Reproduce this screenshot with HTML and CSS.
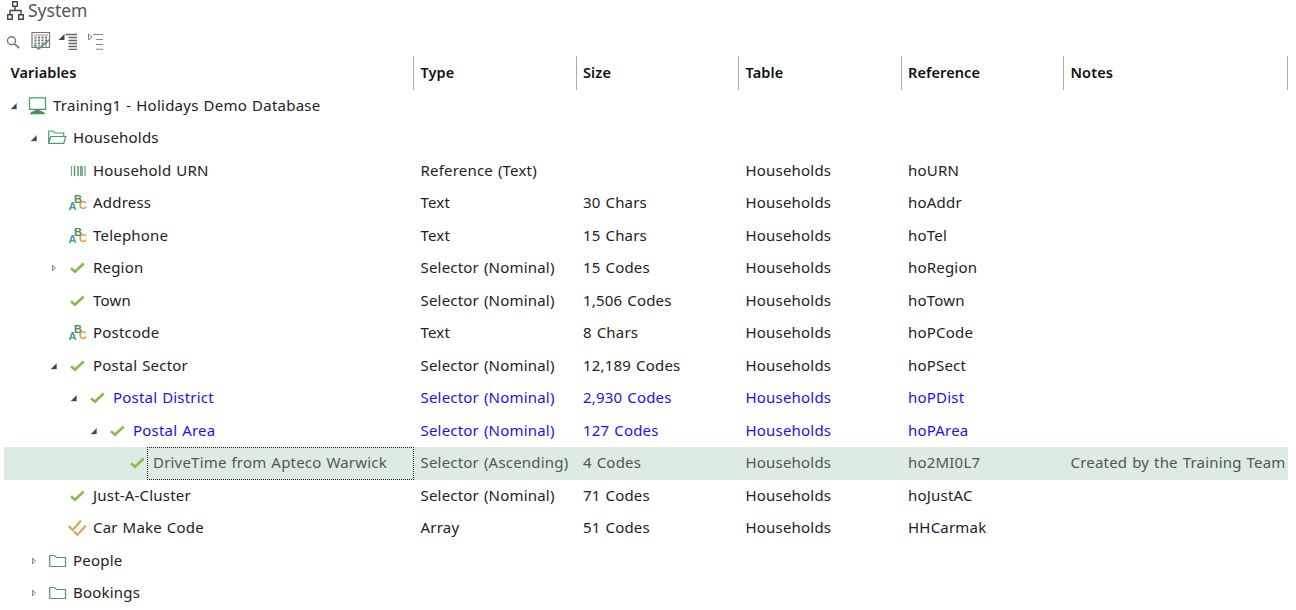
FILE: index.html
```html
<!DOCTYPE html>
<html lang="en">
<head>
    <meta charset="UTF-8">
    <meta name="viewport" content="width=device-width, initial-scale=1.0">
    <title>System</title>
    <link rel="stylesheet" href="styles.css">
</head>
<body>
    <!-- Icon definitions -->
    <svg class="sprite" xmlns="http://www.w3.org/2000/svg">
        <symbol id="open" viewBox="0 0 20 20"><path d="M12.500 7.500v5.500H7z" fill="#444" stroke="#666" stroke-width=".4"/></symbol>
        <symbol id="closed" viewBox="0 0 20 20"><path d="M8.500 7v6l3-3z" fill="#eee" stroke="#888"/></symbol>
        <symbol id="computer" viewBox="0 0 20 20">
            <path d="M2.500 1.800h16v11.500h-16z" fill="none" stroke="#4b9e62" stroke-width="1.300"/>
            <path d="M8.500 14h4l3.500 2H5z" fill="#777"/>
            <path d="M4.500 15.700h12l2 2.600h-16z" fill="#3f9a50"/>
        </symbol>
        <symbol id="folder-open" viewBox="0 0 20 20"><path d="M1.700 15.300V3h4.500l1.500 2h9v3M1.700 15.300l2-6.800h15l-2 6.800z" fill="none" stroke="#4b9e62" stroke-width="1.200"/></symbol>
        <symbol id="folder" viewBox="0 0 20 20"><path d="M2.700 15.500v-11h4.800l2 2h9v9z" fill="none" stroke="#4b9e62" stroke-width="1.200"/></symbol>
        <symbol id="barcode" viewBox="0 0 20 20">
            <path d="M4.500 5v10M13.500 5v10" stroke="#7da587" stroke-width="1.200"/>
            <path d="M7.500 5v10M11 5v10M15 5v10" stroke="#4b9e62" stroke-width="1.400"/>
            <path d="M18 5v10" stroke="#888" stroke-width="1.200"/>
        </symbol>
        <symbol id="abc" viewBox="0 0 20 20">
            <text x="1.500" y="17" fill="#2f9e9b" class="abc-letter">A</text>
            <text x="7" y="9.500" fill="#4d8d62" class="abc-letter">B</text>
            <text x="12" y="16" fill="#e69a45" class="abc-letter">C</text>
        </symbol>
        <symbol id="check" viewBox="0 0 20 20"><path d="M4 10.300l4 3.400L16.700 5.500" fill="none" stroke="#8abb51" stroke-width="2.800"/></symbol>
        <symbol id="array" viewBox="0 0 20 20"><path d="M1.500 8l4.300 4L14 2.500M6.800 13.300l3.600 3.700L19 7.500" fill="none" stroke="#dda65c" stroke-width="2.200"/></symbol>
    </svg>

    <div class="title">
        <svg class="title-icon" viewBox="0 0 20 22"><path d="M7.700 1.700h4.600v4.600H7.700zM2.700 14.700h4.600v4.600H2.700zM13.700 14.700h4.600v4.600h-4.600zM10 6.300v4.200M5 14.700v-4.200h11v4.200" fill="none" stroke="#444" stroke-width="1.400"/></svg>
        <span>System</span>
    </div>

    <div class="toolbar">
        <svg viewBox="0 0 20 20"><circle cx="7.500" cy="10.800" r="4" fill="none" stroke="#777" stroke-width="1.400"/><path d="M10.500 13.800l4.700 4.300" stroke="#777" stroke-width="1.700"/></svg>
        <svg viewBox="0 0 20 20">
            <path d="M1 2.500h17.500v15H1z" fill="#fff" stroke="#777" stroke-width="1.200"/>
            <path d="M3 5h14" stroke="#999"/>
            <path d="M4.500 6.500v10M8 6.500v10M11.500 6.500v10M15 6.500v10" stroke="#777" stroke-width="2" stroke-dasharray="2 1"/>
            <path d="M3 15l4.500 4L18 10" fill="none" stroke="#6a9c78" stroke-width="1.800"/>
        </svg>
        <svg viewBox="0 0 20 20"><path d="M6.500 4v6h-6z" fill="#444"/><path d="M7.500 4.500H19M10.500 7.500H19M10.500 10.500H19M10.500 13.500H19M10.500 16.500H19M10.500 19.300H19" stroke="#666" stroke-width="1.300"/></svg>
        <svg viewBox="0 0 20 20"><path d="M3.500 4v6L7 7z" fill="none" stroke="#888"/><path d="M8 4.500h10M11 9.500h7M11 14.500h7M11 19.300h7" stroke="#888" stroke-width="1.100"/></svg>
    </div>

    <div class="grid">
        <div class="row header">
            <div>Variables</div><div>Type</div><div>Size</div><div>Table</div><div>Reference</div><div>Notes</div>
        </div>
        <div class="row">
            <div class="tree level-0"><svg><use href="#open"/></svg><svg><use href="#computer"/></svg><span class="database">Training1 - Holidays Demo Database</span></div>
        </div>
        <div class="row">
            <div class="tree level-1"><svg><use href="#open"/></svg><svg><use href="#folder-open"/></svg><span>Households</span></div>
        </div>
        <div class="row">
            <div class="tree level-2"><svg></svg><svg><use href="#barcode"/></svg><span>Household URN</span></div>
            <div>Reference (Text)</div><div></div><div>Households</div><div>hoURN</div><div></div>
        </div>
        <div class="row">
            <div class="tree level-2"><svg></svg><svg><use href="#abc"/></svg><span>Address</span></div>
            <div>Text</div><div>30 Chars</div><div>Households</div><div>hoAddr</div><div></div>
        </div>
        <div class="row">
            <div class="tree level-2"><svg></svg><svg><use href="#abc"/></svg><span>Telephone</span></div>
            <div>Text</div><div>15 Chars</div><div>Households</div><div>hoTel</div><div></div>
        </div>
        <div class="row">
            <div class="tree level-2"><svg><use href="#closed"/></svg><svg><use href="#check"/></svg><span>Region</span></div>
            <div>Selector (Nominal)</div><div>15 Codes</div><div>Households</div><div>hoRegion</div><div></div>
        </div>
        <div class="row">
            <div class="tree level-2"><svg></svg><svg><use href="#check"/></svg><span>Town</span></div>
            <div>Selector (Nominal)</div><div>1,506 Codes</div><div>Households</div><div>hoTown</div><div></div>
        </div>
        <div class="row">
            <div class="tree level-2"><svg></svg><svg><use href="#abc"/></svg><span>Postcode</span></div>
            <div>Text</div><div>8 Chars</div><div>Households</div><div>hoPCode</div><div></div>
        </div>
        <div class="row">
            <div class="tree level-2"><svg><use href="#open"/></svg><svg><use href="#check"/></svg><span>Postal Sector</span></div>
            <div>Selector (Nominal)</div><div>12,189 Codes</div><div>Households</div><div>hoPSect</div><div></div>
        </div>
        <div class="row linked">
            <div class="tree level-3"><svg><use href="#open"/></svg><svg><use href="#check"/></svg><span>Postal District</span></div>
            <div>Selector (Nominal)</div><div>2,930 Codes</div><div>Households</div><div>hoPDist</div><div></div>
        </div>
        <div class="row linked">
            <div class="tree level-4"><svg><use href="#open"/></svg><svg><use href="#check"/></svg><span>Postal Area</span></div>
            <div>Selector (Nominal)</div><div>127 Codes</div><div>Households</div><div>hoPArea</div><div></div>
        </div>
        <div class="row selected">
            <div class="tree level-5"><svg></svg><svg><use href="#check"/></svg><span>DriveTime from Apteco Warwick</span></div>
            <div>Selector (Ascending)</div><div>4 Codes</div><div>Households</div><div>ho2MI0L7</div><div>Created by the Training Team</div>
        </div>
        <div class="row">
            <div class="tree level-2"><svg></svg><svg><use href="#check"/></svg><span>Just-A-Cluster</span></div>
            <div>Selector (Nominal)</div><div>71 Codes</div><div>Households</div><div>hoJustAC</div><div></div>
        </div>
        <div class="row">
            <div class="tree level-2"><svg></svg><svg><use href="#array"/></svg><span>Car Make Code</span></div>
            <div>Array</div><div>51 Codes</div><div>Households</div><div>HHCarmak</div><div></div>
        </div>
        <div class="row">
            <div class="tree level-1"><svg><use href="#closed"/></svg><svg><use href="#folder"/></svg><span>People</span></div>
        </div>
        <div class="row">
            <div class="tree level-1"><svg><use href="#closed"/></svg><svg><use href="#folder"/></svg><span>Bookings</span></div>
        </div>
    </div>
</body>
</html>
```
FILE: styles.css
```css
* {
    margin: 0;
    padding: 0;
    box-sizing: border-box;
}

body {
    font-family: 'Noto Sans', 'Open Sans', sans-serif;
    font-size: 15px;
    letter-spacing: 0.2px;
    word-spacing: 0.8px;
    color: #222;
    background-color: #fff;
    height: 610px;
    overflow: hidden;
}

.sprite {
    display: none;
}

.abc-letter {
    font-family: 'Liberation Sans', sans-serif;
    font-size: 11px;
    letter-spacing: 0;
    font-weight: bold;
}

.title {
    display: flex;
    gap: 3px;
    height: 22px;
    padding-left: 5px;
    font-size: 17.5px;
    letter-spacing: 0;
    line-height: 20px;
    color: #555;
}

.title-icon {
    width: 20px;
    height: 22px;
}

.toolbar {
    display: flex;
    align-items: center;
    gap: 7px;
    height: 34px;
    padding: 4px 0 3px 4px;
}

.toolbar svg {
    width: 20px;
    height: 20px;
}

.grid {
    width: 1284px;
    margin-left: 4px;
}

.row {
    display: grid;
    grid-template-columns: 410px 162.5px 162.5px 162.5px 162.5px 224px;
    height: 32.5px;
    line-height: 31.5px;
    white-space: nowrap;
}

.row > div {
    padding-left: 6.5px;
}

.header {
    height: 33.5px;
    line-height: 32.5px;
    color: #111;
    font-size: 14.5px;
    letter-spacing: 0.1px;
    font-weight: 600;
}

.header > div {
    border-right: 1px solid #aaa;
}

.row > .tree {
    display: flex;
    align-items: center;
    padding-left: 0;
}

.tree svg {
    flex: none;
    width: 20px;
    height: 20px;
}

.tree svg + svg {
    margin-left: 3px;
}

.tree span {
    flex: 1;
    height: 32.5px;
    padding-left: 6px;
}

.tree .database {
    letter-spacing: 0.25px;
}

.row > .level-1 {
    padding-left: 20px;
}

.row > .level-2 {
    padding-left: 40px;
}

.row > .level-3 {
    padding-left: 60px;
}

.row > .level-4 {
    padding-left: 80px;
}

.row > .level-5 {
    padding-left: 100px;
}

.linked {
    color: #1c10f5;
}

.selected {
    background-color: #dcece2;
    color: #555;
}

.selected .tree span {
    padding-left: 5px;
    line-height: 29.5px;
    border: 1px dotted #222;
}
```
